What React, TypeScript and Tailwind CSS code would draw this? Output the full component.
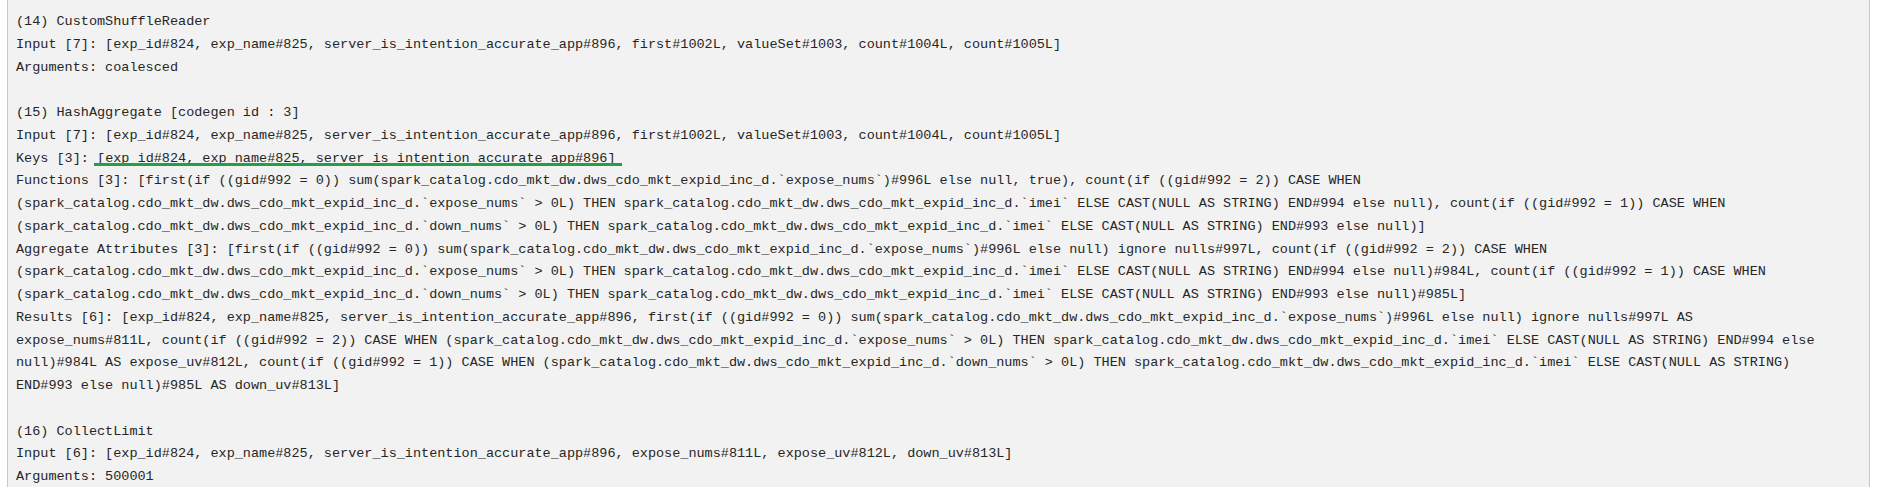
const T = "spark_catalog.cdo_mkt_dw.dws_cdo_mkt_expid_inc_d";
const COLS = "[exp_id#824, exp_name#825, server_is_intention_accurate_app#896";

const lines: (string | null)[] = [
  "(14) CustomShuffleReader",
  `Input [7]: ${COLS}, first#1002L, valueSet#1003, count#1004L, count#1005L]`,
  "Arguments: coalesced",
  null,
  "(15) HashAggregate [codegen id : 3]",
  `Input [7]: ${COLS}, first#1002L, valueSet#1003, count#1004L, count#1005L]`,
  "KEYS",
  `Functions [3]: [first(if ((gid#992 = 0)) sum(${T}.\`expose_nums\`)#996L else null, true), count(if ((gid#992 = 2)) CASE WHEN`,
  `(${T}.\`expose_nums\` > 0L) THEN ${T}.\`imei\` ELSE CAST(NULL AS STRING) END#994 else null), count(if ((gid#992 = 1)) CASE WHEN`,
  `(${T}.\`down_nums\` > 0L) THEN ${T}.\`imei\` ELSE CAST(NULL AS STRING) END#993 else null)]`,
  `Aggregate Attributes [3]: [first(if ((gid#992 = 0)) sum(${T}.\`expose_nums\`)#996L else null) ignore nulls#997L, count(if ((gid#992 = 2)) CASE WHEN`,
  `(${T}.\`expose_nums\` > 0L) THEN ${T}.\`imei\` ELSE CAST(NULL AS STRING) END#994 else null)#984L, count(if ((gid#992 = 1)) CASE WHEN`,
  `(${T}.\`down_nums\` > 0L) THEN ${T}.\`imei\` ELSE CAST(NULL AS STRING) END#993 else null)#985L]`,
  `Results [6]: ${COLS}, first(if ((gid#992 = 0)) sum(${T}.\`expose_nums\`)#996L else null) ignore nulls#997L AS`,
  `expose_nums#811L, count(if ((gid#992 = 2)) CASE WHEN (${T}.\`expose_nums\` > 0L) THEN ${T}.\`imei\` ELSE CAST(NULL AS STRING) END#994 else`,
  `null)#984L AS expose_uv#812L, count(if ((gid#992 = 1)) CASE WHEN (${T}.\`down_nums\` > 0L) THEN ${T}.\`imei\` ELSE CAST(NULL AS STRING)`,
  "END#993 else null)#985L AS down_uv#813L]",
  null,
  "(16) CollectLimit",
  `Input [6]: ${COLS}, expose_nums#811L, expose_uv#812L, down_uv#813L]`,
  "Arguments: 500001",
];

export default function App() {
  return (
    <div className="h-[487px] w-[1883px] overflow-hidden bg-white">
      <div className="ml-[7px] h-full w-[1863px] border-x border-[#c8c8c8] bg-[#f2f2f2] pl-[8px] pt-[11px] font-['Liberation_Mono',monospace] text-[13.5px] leading-[22.75px] text-[#262626]">
        {lines.map((l, i) =>
          l === null ? (
            <div key={i} className="h-[22.75px]" />
          ) : l === "KEYS" ? (
            <div key={i} className="whitespace-pre">
              Keys [3]:{" "}
              <span className="relative">
                {COLS}]
                {/* green hand-drawn highlight */}
                <span className="absolute -left-[3px] -right-[6px] bottom-0 h-[3px] bg-[#22a045]" />
              </span>
            </div>
          ) : (
            <div key={i} className="whitespace-pre">
              {l}
            </div>
          )
        )}
      </div>
    </div>
  );
}
